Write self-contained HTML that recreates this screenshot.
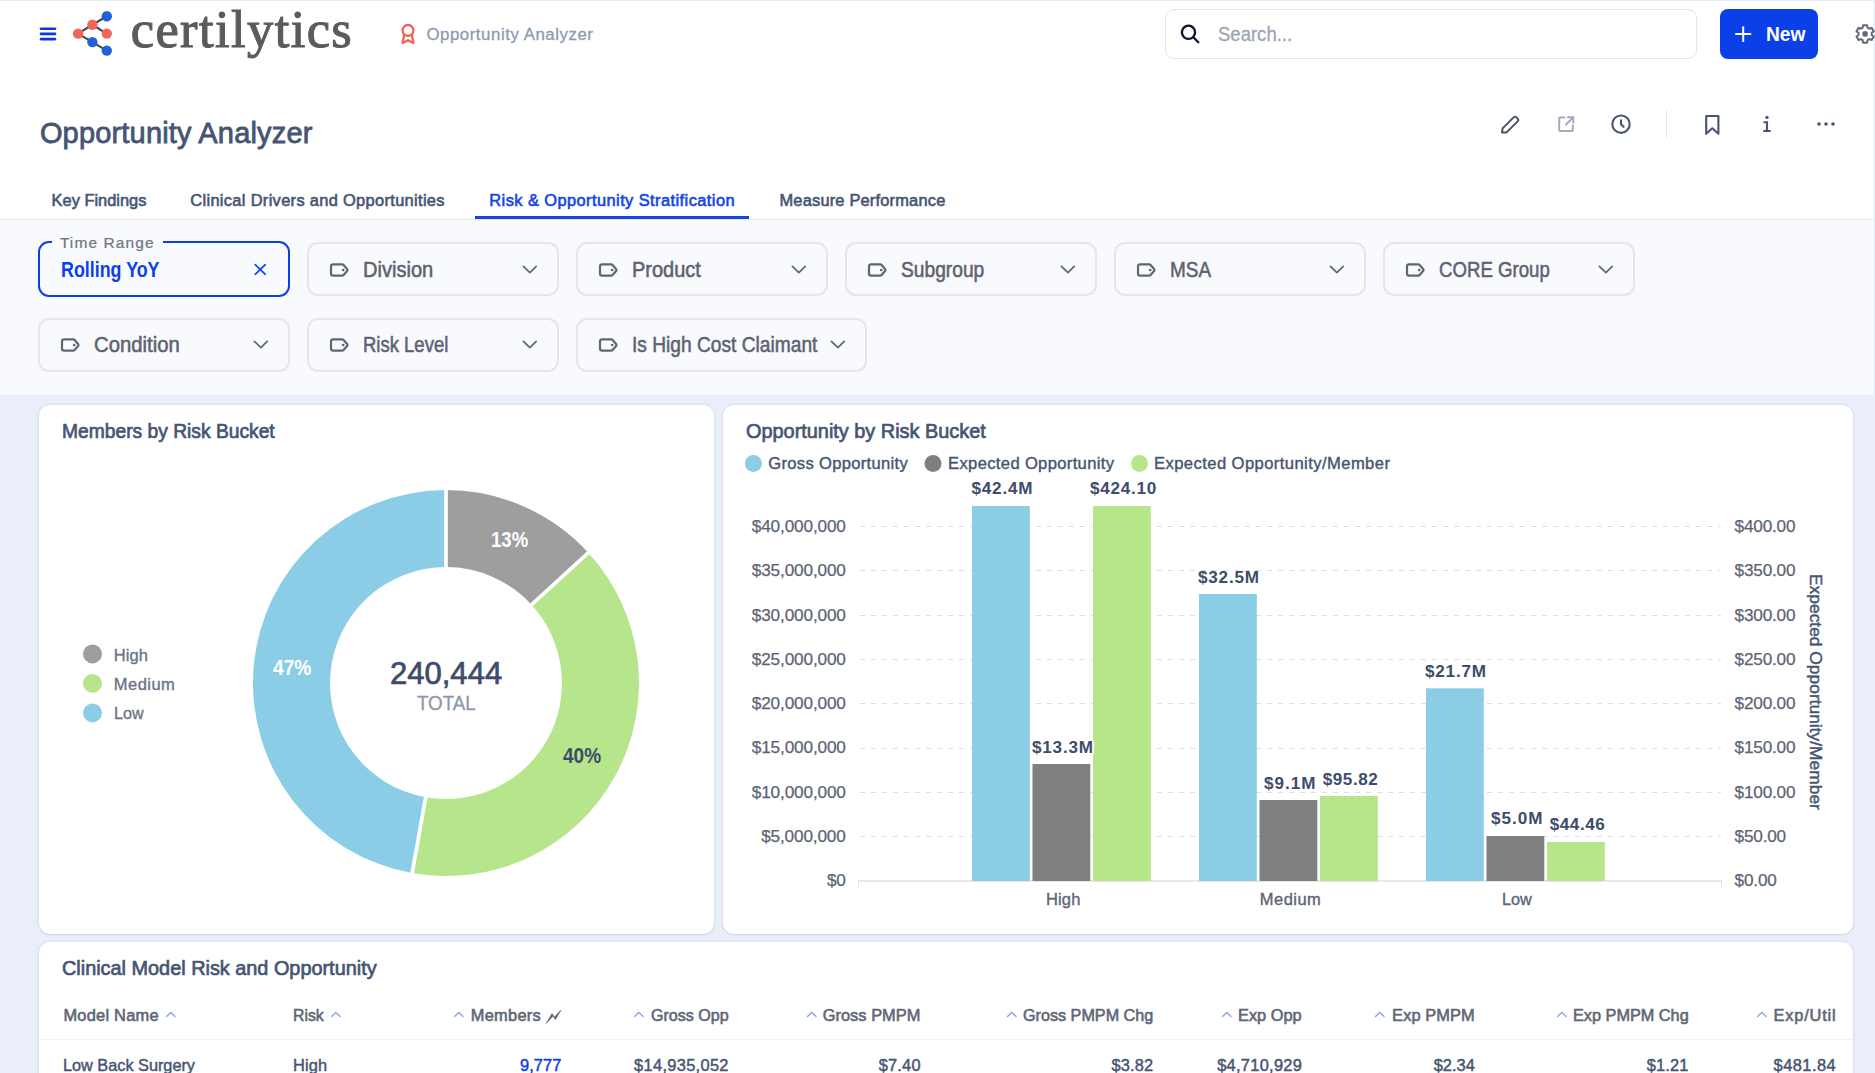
<!DOCTYPE html>
<html><head><meta charset="utf-8"><title>Opportunity Analyzer</title>
<style>
html,body{margin:0;padding:0;}
body{width:1875px;height:1073px;overflow:hidden;position:relative;background:#e9eefa;font-family:"Liberation Sans",sans-serif;}
.t{position:absolute;white-space:nowrap;}
.r{position:absolute;}
</style></head><body>
<div class="r" style="left:0px;top:0px;width:1874px;height:219px;background:#ffffff"></div>
<div class="r" style="left:0px;top:0px;width:1875px;height:1px;background:#e4eaf7"></div>
<div class="r" style="left:0px;top:219px;width:1874px;height:1px;background:#ebe9ea"></div>
<div class="r" style="left:0px;top:220px;width:1874px;height:175px;background:#f9fafd"></div>
<div class="r" style="left:1874px;top:0px;width:1px;height:395px;background:#e4eaf7"></div>
<svg class="r" style="left:36px;top:24px;" width="24" height="20" viewBox="0 0 24 20"><line x1="5" y1="4.7" x2="19" y2="4.7" stroke="#0a36e6" stroke-width="2.6" stroke-linecap="round"/><line x1="5" y1="9.9" x2="19" y2="9.9" stroke="#0a36e6" stroke-width="2.6" stroke-linecap="round"/><line x1="5" y1="15.1" x2="19" y2="15.1" stroke="#0a36e6" stroke-width="2.6" stroke-linecap="round"/></svg>
<svg class="r" style="left:66px;top:6px;" width="50" height="52" viewBox="0 0 50 52"><line x1="12.1" y1="27.6" x2="26.4" y2="18.8" stroke="#4a4a4a" stroke-width="2.2"/><line x1="26.4" y1="18.8" x2="40.8" y2="10.3" stroke="#4a4a4a" stroke-width="2.2"/><line x1="26.4" y1="18.8" x2="40.8" y2="27.6" stroke="#4a4a4a" stroke-width="2.2"/><line x1="12.1" y1="27.6" x2="26.4" y2="36.1" stroke="#4a4a4a" stroke-width="2.2"/><line x1="26.4" y1="36.1" x2="40.8" y2="44.6" stroke="#4a4a4a" stroke-width="2.2"/><circle cx="12.1" cy="27.6" r="5.2" fill="#f0675a"/><circle cx="26.4" cy="18.8" r="5.2" fill="#f0675a"/><circle cx="40.8" cy="27.6" r="5.2" fill="#f0675a"/><circle cx="40.8" cy="10.3" r="5.2" fill="#2160d9"/><circle cx="26.4" cy="36.1" r="5.2" fill="#2160d9"/><circle cx="40.8" cy="44.6" r="5.2" fill="#2160d9"/></svg>
<div class="t" style="left:130.70px;top:3.00px;font-size:52.50px;line-height:52.50px;font-weight:normal;color:#5b5b5b;letter-spacing:1.410px;font-family:'Liberation Serif', serif;-webkit-text-stroke:1.1px #5b5b5b">certilytics</div>
<svg class="r" style="left:399px;top:22px;" width="18" height="24" viewBox="0 0 18 24"><g fill="none" stroke="#ef6457" stroke-width="2.3" stroke-linejoin="round"><circle cx="9" cy="8.4" r="5.4"/><path d="M5.3 12.6 L3.5 21 L9 18.4 L14.5 21 L12.7 12.6"/></g></svg>
<div class="t" style="left:426.40px;top:27.00px;font-size:16.80px;line-height:16.80px;font-weight:normal;color:#8c9ab3;letter-spacing:0.568px;font-family:'Liberation Sans', sans-serif;-webkit-text-stroke:0.3px #8c9ab3">Opportunity Analyzer</div>
<div class="r" style="left:1165px;top:9px;width:530px;height:48px;background:#fff;border:1.5px solid #e6e6e8;border-radius:9px"></div>
<svg class="r" style="left:1178px;top:22px;" width="24" height="24" viewBox="0 0 24 24"><g fill="none" stroke="#0b1236" stroke-width="2.3" stroke-linecap="round"><circle cx="10.5" cy="10.3" r="6.6"/><line x1="15.3" y1="15.2" x2="20.3" y2="20.3"/></g></svg>
<div class="t" style="left:1217.90px;top:24.00px;font-size:20.80px;line-height:20.80px;font-weight:normal;color:#9ba4b6;letter-spacing:0.000px;font-family:'Liberation Sans', sans-serif;transform:scaleX(0.8906);transform-origin:0 0;-webkit-text-stroke:0.3px #9ba4b6">Search...</div>
<div class="r" style="left:1720px;top:9px;width:98px;height:50px;background:#0b3fe8;border-radius:8px"></div>
<svg class="r" style="left:1733px;top:24px;" width="20" height="20" viewBox="0 0 20 20"><g stroke="#fff" stroke-width="2" stroke-linecap="butt"><line x1="2.2" y1="10" x2="18.2" y2="10"/><line x1="10.2" y1="2.4" x2="10.2" y2="17.9"/></g></svg>
<div class="t" style="left:1766.20px;top:24.00px;font-size:20.80px;line-height:20.80px;font-weight:bold;color:#ffffff;letter-spacing:0.000px;font-family:'Liberation Sans', sans-serif;transform:scaleX(0.9231);transform-origin:0 0;">New</div>
<svg class="r" style="left:1854px;top:23px;" width="21" height="22" viewBox="0 0 21 22"><path d="M8.70 4.65 L9.08 2.13 L13.12 2.13 L13.50 4.65 L15.32 5.69 L15.32 5.69 L17.68 4.76 L19.71 8.27 L17.72 9.85 L17.72 11.95 L17.72 11.95 L19.71 13.53 L17.68 17.04 L15.32 16.11 L13.50 17.15 L13.50 17.15 L13.12 19.67 L9.08 19.67 L8.70 17.15 L6.88 16.11 L6.88 16.11 L4.52 17.04 L2.49 13.53 L4.48 11.95 L4.48 9.85 L4.48 9.85 L2.49 8.27 L4.52 4.76 L6.88 5.69 L8.70 4.65 Z" fill="none" stroke="#636a77" stroke-width="2" stroke-linejoin="round"/><circle cx="11.1" cy="10.9" r="2.8" fill="#636a77"/></svg>
<div class="t" style="left:39.90px;top:119.00px;font-size:29.00px;line-height:29.00px;font-weight:normal;color:#465573;letter-spacing:0.174px;font-family:'Liberation Sans', sans-serif;-webkit-text-stroke:0.8px #465573">Opportunity Analyzer</div>
<svg class="r" style="left:1498px;top:112px;" width="24" height="24" viewBox="0 0 24 24"><g fill="none" stroke="#475570" stroke-width="2" stroke-linejoin="round" stroke-linecap="round"><path d="M4 20.5 L4.6 16.4 L15.6 5.4 Q17 4 18.4 5.4 L19.6 6.6 Q21 8 19.6 9.4 L8.6 20.4 Z"/></g></svg>
<svg class="r" style="left:1556px;top:114px;" width="20" height="20" viewBox="0 0 20 20"><g fill="none" stroke="#a3aab9" stroke-width="2" stroke-linecap="round" stroke-linejoin="round"><path d="M8.5 3.5 H4 Q3.2 3.5 3.2 4.3 V16.3 Q3.2 17.1 4 17.1 H16 Q16.8 17.1 16.8 16.3 V11.5"/><path d="M12 3.2 H17.3 V8.5"/><line x1="17" y1="3.5" x2="10" y2="10.5"/></g></svg>
<svg class="r" style="left:1609px;top:112px;" width="24" height="24" viewBox="0 0 24 24"><g fill="none" stroke="#475570" stroke-width="2.1" stroke-linecap="round"><circle cx="12" cy="12.2" r="8.7"/><path d="M12 8.2 V12.2 L14.6 14.8"/></g></svg>
<div class="r" style="left:1666px;top:110px;width:1px;height:28px;background:#e5e7eb"></div>
<svg class="r" style="left:1702px;top:112px;" width="20" height="26" viewBox="0 0 20 26"><g fill="none" stroke="#475570" stroke-width="2.1" stroke-linejoin="round"><path d="M4.2 4 H16.4 V21.8 L10.3 16.3 L4.2 21.8 Z"/></g></svg>
<svg class="r" style="left:1758px;top:112px;" width="16" height="24" viewBox="0 0 16 24"><g fill="#475570"><circle cx="9" cy="5.4" r="1.7"/></g><g fill="none" stroke="#475570" stroke-width="2.1"><path d="M5.5 10.3 H9 V19.3"/><path d="M5.3 19 H12.6"/></g></svg>
<svg class="r" style="left:1814px;top:116px;" width="24" height="16" viewBox="0 0 24 16"><g fill="#475570"><circle cx="5" cy="8" r="1.8"/><circle cx="12" cy="8" r="1.8"/><circle cx="19" cy="8" r="1.8"/></g></svg>
<div class="t" style="left:51.60px;top:192.00px;font-size:16.40px;line-height:16.40px;font-weight:normal;color:#465573;letter-spacing:0.000px;font-family:'Liberation Sans', sans-serif;-webkit-text-stroke:0.6px #465573">Key Findings</div>
<div class="t" style="left:190.30px;top:192.00px;font-size:16.40px;line-height:16.40px;font-weight:normal;color:#465573;letter-spacing:0.333px;font-family:'Liberation Sans', sans-serif;-webkit-text-stroke:0.6px #465573">Clinical Drivers and Opportunities</div>
<div class="t" style="left:489.30px;top:192.00px;font-size:16.40px;line-height:16.40px;font-weight:normal;color:#1346e6;letter-spacing:0.434px;font-family:'Liberation Sans', sans-serif;-webkit-text-stroke:0.6px #1346e6">Risk &amp; Opportunity Stratification</div>
<div class="t" style="left:779.50px;top:192.00px;font-size:16.40px;line-height:16.40px;font-weight:normal;color:#465573;letter-spacing:0.200px;font-family:'Liberation Sans', sans-serif;-webkit-text-stroke:0.6px #465573">Measure Performance</div>
<div class="r" style="left:475px;top:216px;width:274px;height:3px;background:#1346e6"></div>
<div class="r" style="left:38px;top:241px;width:248px;height:52px;border:2px solid #0b3fe8;border-radius:11px;background:#f9fafd"></div>
<div class="r" style="left:52px;top:236px;width:111px;height:10px;background:#f9fafd"></div>
<div class="t" style="left:59.90px;top:235.00px;font-size:15.50px;line-height:15.50px;font-weight:normal;color:#6f7480;letter-spacing:1.089px;font-family:'Liberation Sans', sans-serif;-webkit-text-stroke:0.2px #6f7480">Time Range</div>
<div class="t" style="left:60.60px;top:260.00px;font-size:21.30px;line-height:21.30px;font-weight:bold;color:#0b3fe8;letter-spacing:0.000px;font-family:'Liberation Sans', sans-serif;transform:scaleX(0.8383);transform-origin:0 0;">Rolling YoY</div>
<svg class="r" style="left:252px;top:261px;" width="16" height="16" viewBox="0 0 16 16"><g stroke="#0b3fe8" stroke-width="1.6" stroke-linecap="round"><line x1="3.2" y1="3.6" x2="13.3" y2="13.3"/><line x1="13.3" y1="3.6" x2="3.2" y2="13.3"/></g></svg>
<div class="r" style="left:307px;top:242px;width:248px;height:50px;border:2px solid #e8e5e5;border-radius:11px;background:#f9fafd"></div>
<svg class="r" style="left:327px;top:262px;" width="24" height="16" viewBox="0 0 24 16"><g fill="none" stroke="#5f6572" stroke-width="2.2" stroke-linejoin="round"><path d="M6.2 2.3 H15.1 Q16 2.3 16.6 3 L20.3 7.3 Q20.8 8 20.3 8.7 L16.6 13 Q16 13.7 15.1 13.7 H6.2 Q4 13.7 4 11.5 V4.5 Q4 2.3 6.2 2.3 Z"/></g><circle cx="16.2" cy="8" r="1.35" fill="#5f6572"/></svg>
<div class="t" style="left:362.70px;top:260.00px;font-size:21.50px;line-height:21.50px;font-weight:normal;color:#5d6371;letter-spacing:0.000px;font-family:'Liberation Sans', sans-serif;transform:scaleX(0.9323);transform-origin:0 0;-webkit-text-stroke:0.55px #5d6371">Division</div>
<svg class="r" style="left:521px;top:263px;" width="18" height="12" viewBox="0 0 18 12"><path d="M2.4 3.3 L8.9 9.6 L15.2 3.3" fill="none" stroke="#5f6572" stroke-width="1.7" stroke-linecap="round" stroke-linejoin="round"/></svg>
<div class="r" style="left:576px;top:242px;width:248px;height:50px;border:2px solid #e8e5e5;border-radius:11px;background:#f9fafd"></div>
<svg class="r" style="left:596px;top:262px;" width="24" height="16" viewBox="0 0 24 16"><g fill="none" stroke="#5f6572" stroke-width="2.2" stroke-linejoin="round"><path d="M6.2 2.3 H15.1 Q16 2.3 16.6 3 L20.3 7.3 Q20.8 8 20.3 8.7 L16.6 13 Q16 13.7 15.1 13.7 H6.2 Q4 13.7 4 11.5 V4.5 Q4 2.3 6.2 2.3 Z"/></g><circle cx="16.2" cy="8" r="1.35" fill="#5f6572"/></svg>
<div class="t" style="left:631.70px;top:260.00px;font-size:21.50px;line-height:21.50px;font-weight:normal;color:#5d6371;letter-spacing:0.000px;font-family:'Liberation Sans', sans-serif;transform:scaleX(0.9298);transform-origin:0 0;-webkit-text-stroke:0.55px #5d6371">Product</div>
<svg class="r" style="left:790px;top:263px;" width="18" height="12" viewBox="0 0 18 12"><path d="M2.4 3.3 L8.9 9.6 L15.2 3.3" fill="none" stroke="#5f6572" stroke-width="1.7" stroke-linecap="round" stroke-linejoin="round"/></svg>
<div class="r" style="left:845px;top:242px;width:248px;height:50px;border:2px solid #e8e5e5;border-radius:11px;background:#f9fafd"></div>
<svg class="r" style="left:865px;top:262px;" width="24" height="16" viewBox="0 0 24 16"><g fill="none" stroke="#5f6572" stroke-width="2.2" stroke-linejoin="round"><path d="M6.2 2.3 H15.1 Q16 2.3 16.6 3 L20.3 7.3 Q20.8 8 20.3 8.7 L16.6 13 Q16 13.7 15.1 13.7 H6.2 Q4 13.7 4 11.5 V4.5 Q4 2.3 6.2 2.3 Z"/></g><circle cx="16.2" cy="8" r="1.35" fill="#5f6572"/></svg>
<div class="t" style="left:900.70px;top:260.00px;font-size:21.50px;line-height:21.50px;font-weight:normal;color:#5d6371;letter-spacing:0.000px;font-family:'Liberation Sans', sans-serif;transform:scaleX(0.8927);transform-origin:0 0;-webkit-text-stroke:0.55px #5d6371">Subgroup</div>
<svg class="r" style="left:1059px;top:263px;" width="18" height="12" viewBox="0 0 18 12"><path d="M2.4 3.3 L8.9 9.6 L15.2 3.3" fill="none" stroke="#5f6572" stroke-width="1.7" stroke-linecap="round" stroke-linejoin="round"/></svg>
<div class="r" style="left:1114px;top:242px;width:248px;height:50px;border:2px solid #e8e5e5;border-radius:11px;background:#f9fafd"></div>
<svg class="r" style="left:1134px;top:262px;" width="24" height="16" viewBox="0 0 24 16"><g fill="none" stroke="#5f6572" stroke-width="2.2" stroke-linejoin="round"><path d="M6.2 2.3 H15.1 Q16 2.3 16.6 3 L20.3 7.3 Q20.8 8 20.3 8.7 L16.6 13 Q16 13.7 15.1 13.7 H6.2 Q4 13.7 4 11.5 V4.5 Q4 2.3 6.2 2.3 Z"/></g><circle cx="16.2" cy="8" r="1.35" fill="#5f6572"/></svg>
<div class="t" style="left:1169.70px;top:260.00px;font-size:21.50px;line-height:21.50px;font-weight:normal;color:#5d6371;letter-spacing:0.000px;font-family:'Liberation Sans', sans-serif;transform:scaleX(0.8820);transform-origin:0 0;-webkit-text-stroke:0.55px #5d6371">MSA</div>
<svg class="r" style="left:1328px;top:263px;" width="18" height="12" viewBox="0 0 18 12"><path d="M2.4 3.3 L8.9 9.6 L15.2 3.3" fill="none" stroke="#5f6572" stroke-width="1.7" stroke-linecap="round" stroke-linejoin="round"/></svg>
<div class="r" style="left:1383px;top:242px;width:248px;height:50px;border:2px solid #e8e5e5;border-radius:11px;background:#f9fafd"></div>
<svg class="r" style="left:1403px;top:262px;" width="24" height="16" viewBox="0 0 24 16"><g fill="none" stroke="#5f6572" stroke-width="2.2" stroke-linejoin="round"><path d="M6.2 2.3 H15.1 Q16 2.3 16.6 3 L20.3 7.3 Q20.8 8 20.3 8.7 L16.6 13 Q16 13.7 15.1 13.7 H6.2 Q4 13.7 4 11.5 V4.5 Q4 2.3 6.2 2.3 Z"/></g><circle cx="16.2" cy="8" r="1.35" fill="#5f6572"/></svg>
<div class="t" style="left:1438.70px;top:260.00px;font-size:21.50px;line-height:21.50px;font-weight:normal;color:#5d6371;letter-spacing:0.000px;font-family:'Liberation Sans', sans-serif;transform:scaleX(0.8662);transform-origin:0 0;-webkit-text-stroke:0.55px #5d6371">CORE Group</div>
<svg class="r" style="left:1597px;top:263px;" width="18" height="12" viewBox="0 0 18 12"><path d="M2.4 3.3 L8.9 9.6 L15.2 3.3" fill="none" stroke="#5f6572" stroke-width="1.7" stroke-linecap="round" stroke-linejoin="round"/></svg>
<div class="r" style="left:38px;top:318px;width:248px;height:50px;border:2px solid #e8e5e5;border-radius:11px;background:#f9fafd"></div>
<svg class="r" style="left:58px;top:337px;" width="24" height="16" viewBox="0 0 24 16"><g fill="none" stroke="#5f6572" stroke-width="2.2" stroke-linejoin="round"><path d="M6.2 2.3 H15.1 Q16 2.3 16.6 3 L20.3 7.3 Q20.8 8 20.3 8.7 L16.6 13 Q16 13.7 15.1 13.7 H6.2 Q4 13.7 4 11.5 V4.5 Q4 2.3 6.2 2.3 Z"/></g><circle cx="16.2" cy="8" r="1.35" fill="#5f6572"/></svg>
<div class="t" style="left:93.70px;top:335.00px;font-size:21.50px;line-height:21.50px;font-weight:normal;color:#5d6371;letter-spacing:0.000px;font-family:'Liberation Sans', sans-serif;transform:scaleX(0.9438);transform-origin:0 0;-webkit-text-stroke:0.55px #5d6371">Condition</div>
<svg class="r" style="left:252px;top:338px;" width="18" height="12" viewBox="0 0 18 12"><path d="M2.4 3.3 L8.9 9.6 L15.2 3.3" fill="none" stroke="#5f6572" stroke-width="1.7" stroke-linecap="round" stroke-linejoin="round"/></svg>
<div class="r" style="left:307px;top:318px;width:248px;height:50px;border:2px solid #e8e5e5;border-radius:11px;background:#f9fafd"></div>
<svg class="r" style="left:327px;top:337px;" width="24" height="16" viewBox="0 0 24 16"><g fill="none" stroke="#5f6572" stroke-width="2.2" stroke-linejoin="round"><path d="M6.2 2.3 H15.1 Q16 2.3 16.6 3 L20.3 7.3 Q20.8 8 20.3 8.7 L16.6 13 Q16 13.7 15.1 13.7 H6.2 Q4 13.7 4 11.5 V4.5 Q4 2.3 6.2 2.3 Z"/></g><circle cx="16.2" cy="8" r="1.35" fill="#5f6572"/></svg>
<div class="t" style="left:362.70px;top:335.00px;font-size:21.50px;line-height:21.50px;font-weight:normal;color:#5d6371;letter-spacing:0.000px;font-family:'Liberation Sans', sans-serif;transform:scaleX(0.8599);transform-origin:0 0;-webkit-text-stroke:0.55px #5d6371">Risk Level</div>
<svg class="r" style="left:521px;top:338px;" width="18" height="12" viewBox="0 0 18 12"><path d="M2.4 3.3 L8.9 9.6 L15.2 3.3" fill="none" stroke="#5f6572" stroke-width="1.7" stroke-linecap="round" stroke-linejoin="round"/></svg>
<div class="r" style="left:576px;top:318px;width:287px;height:50px;border:2px solid #e8e5e5;border-radius:11px;background:#f9fafd"></div>
<svg class="r" style="left:596px;top:337px;" width="24" height="16" viewBox="0 0 24 16"><g fill="none" stroke="#5f6572" stroke-width="2.2" stroke-linejoin="round"><path d="M6.2 2.3 H15.1 Q16 2.3 16.6 3 L20.3 7.3 Q20.8 8 20.3 8.7 L16.6 13 Q16 13.7 15.1 13.7 H6.2 Q4 13.7 4 11.5 V4.5 Q4 2.3 6.2 2.3 Z"/></g><circle cx="16.2" cy="8" r="1.35" fill="#5f6572"/></svg>
<div class="t" style="left:631.70px;top:335.00px;font-size:21.50px;line-height:21.50px;font-weight:normal;color:#5d6371;letter-spacing:0.000px;font-family:'Liberation Sans', sans-serif;transform:scaleX(0.8918);transform-origin:0 0;-webkit-text-stroke:0.55px #5d6371">Is High Cost Claimant</div>
<svg class="r" style="left:829px;top:338px;" width="18" height="12" viewBox="0 0 18 12"><path d="M2.4 3.3 L8.9 9.6 L15.2 3.3" fill="none" stroke="#5f6572" stroke-width="1.7" stroke-linecap="round" stroke-linejoin="round"/></svg>
<div class="r" style="left:39px;top:405px;width:675px;height:529px;background:#fff;border-radius:11px;box-shadow:0 0 3px rgba(40,50,90,0.13),0 1px 2px rgba(40,50,90,0.08)"></div>
<div class="r" style="left:723px;top:405px;width:1130px;height:529px;background:#fff;border-radius:11px;box-shadow:0 0 3px rgba(40,50,90,0.13),0 1px 2px rgba(40,50,90,0.08)"></div>
<div class="r" style="left:39px;top:942px;width:1814px;height:200px;background:#fff;border-radius:11px;box-shadow:0 0 3px rgba(40,50,90,0.13),0 1px 2px rgba(40,50,90,0.08)"></div>
<div class="t" style="left:62.40px;top:421.00px;font-size:20.30px;line-height:20.30px;font-weight:normal;color:#465573;letter-spacing:0.000px;font-family:'Liberation Sans', sans-serif;transform:scaleX(0.9483);transform-origin:0 0;-webkit-text-stroke:0.7px #465573">Members by Risk Bucket</div>
<svg class="r" style="left:82px;top:643px;" width="22" height="22" viewBox="0 0 22 22"><circle cx="10.5" cy="10.90" r="9.5" fill="#9e9e9e"/></svg>
<div class="t" style="left:113.80px;top:647.00px;font-size:16.50px;line-height:16.50px;font-weight:normal;color:#6b7385;letter-spacing:0.100px;font-family:'Liberation Sans', sans-serif;-webkit-text-stroke:0.35px #6b7385">High</div>
<svg class="r" style="left:82px;top:673px;" width="22" height="22" viewBox="0 0 22 22"><circle cx="10.5" cy="10.40" r="9.5" fill="#b7e58b"/></svg>
<div class="t" style="left:113.80px;top:676.00px;font-size:16.50px;line-height:16.50px;font-weight:normal;color:#6b7385;letter-spacing:0.460px;font-family:'Liberation Sans', sans-serif;-webkit-text-stroke:0.35px #6b7385">Medium</div>
<svg class="r" style="left:82px;top:702px;" width="22" height="22" viewBox="0 0 22 22"><circle cx="10.5" cy="10.90" r="9.5" fill="#8bcde6"/></svg>
<div class="t" style="left:113.80px;top:705.00px;font-size:16.50px;line-height:16.50px;font-weight:normal;color:#6b7385;letter-spacing:0.000px;font-family:'Liberation Sans', sans-serif;transform:scaleX(0.9770);transform-origin:0 0;-webkit-text-stroke:0.35px #6b7385">Low</div>
<svg class="r" style="left:0;top:0" width="720" height="940" viewBox="0 0 720 940"><path d="M446.00 490.10 A193.0 193.0 0 0 1 588.29 552.71 L531.52 604.73 A116.0 116.0 0 0 0 446.00 567.10 Z" fill="#9e9e9e"/><path d="M588.29 552.71 A193.0 193.0 0 0 1 412.15 873.11 L425.66 797.30 A116.0 116.0 0 0 0 531.52 604.73 Z" fill="#b7e58b"/><path d="M412.15 873.11 A193.0 193.0 0 0 1 446.00 490.10 L446.00 567.10 A116.0 116.0 0 0 0 425.66 797.30 Z" fill="#8bcde6"/><line x1="446.00" y1="569.10" x2="446.00" y2="488.10" stroke="#fff" stroke-width="3.7"/><line x1="530.05" y1="606.08" x2="589.77" y2="551.36" stroke="#fff" stroke-width="3.7"/><line x1="426.01" y1="795.33" x2="411.80" y2="875.08" stroke="#fff" stroke-width="3.7"/></svg>
<div class="t" style="left:490.80px;top:530.00px;font-size:21.50px;line-height:21.50px;font-weight:bold;color:#ffffff;letter-spacing:0.000px;font-family:'Liberation Sans', sans-serif;transform:scaleX(0.8628);transform-origin:0 0;">13%</div>
<div class="t" style="left:273.30px;top:658.00px;font-size:21.50px;line-height:21.50px;font-weight:bold;color:#ffffff;letter-spacing:0.000px;font-family:'Liberation Sans', sans-serif;transform:scaleX(0.8907);transform-origin:0 0;">47%</div>
<div class="t" style="left:562.90px;top:746.00px;font-size:21.50px;line-height:21.50px;font-weight:bold;color:#3e4c6b;letter-spacing:0.000px;font-family:'Liberation Sans', sans-serif;transform:scaleX(0.8837);transform-origin:0 0;">40%</div>
<div class="t" style="left:389.90px;top:658.00px;font-size:31.00px;line-height:31.00px;font-weight:normal;color:#3e4c6b;letter-spacing:0.033px;font-family:'Liberation Sans', sans-serif;-webkit-text-stroke:0.7px #3e4c6b">240,444</div>
<div class="t" style="left:416.90px;top:692.00px;font-size:21.00px;line-height:21.00px;font-weight:normal;color:#8e96a8;letter-spacing:0.000px;font-family:'Liberation Sans', sans-serif;transform:scaleX(0.8935);transform-origin:0 0;-webkit-text-stroke:0.3px #8e96a8">TOTAL</div>
<div class="t" style="left:745.90px;top:421.00px;font-size:20.30px;line-height:20.30px;font-weight:normal;color:#465573;letter-spacing:0.000px;font-family:'Liberation Sans', sans-serif;transform:scaleX(0.9804);transform-origin:0 0;-webkit-text-stroke:0.7px #465573">Opportunity by Risk Bucket</div>
<svg class="r" style="left:740px;top:450px;" width="420" height="28" viewBox="0 0 420 28"><circle cx="13.40" cy="13.60" r="8.5" fill="#8bcde5"/><circle cx="193.00" cy="13.60" r="8.5" fill="#7f7f7f"/><circle cx="399.50" cy="13.60" r="8.5" fill="#b6e58a"/></svg>
<div class="t" style="left:768.30px;top:456.00px;font-size:16.60px;line-height:16.60px;font-weight:normal;color:#465573;letter-spacing:0.300px;font-family:'Liberation Sans', sans-serif;-webkit-text-stroke:0.4px #465573">Gross Opportunity</div>
<div class="t" style="left:948.10px;top:456.00px;font-size:16.60px;line-height:16.60px;font-weight:normal;color:#465573;letter-spacing:0.332px;font-family:'Liberation Sans', sans-serif;-webkit-text-stroke:0.4px #465573">Expected Opportunity</div>
<div class="t" style="left:1154.00px;top:456.00px;font-size:16.60px;line-height:16.60px;font-weight:normal;color:#465573;letter-spacing:0.419px;font-family:'Liberation Sans', sans-serif;-webkit-text-stroke:0.4px #465573">Expected Opportunity/Member</div>
<svg class="r" style="left:723px;top:405px;" width="1130" height="529" viewBox="0 0 1130 529"><line x1="137" y1="431.50" x2="998" y2="431.50" stroke="#dedede" stroke-width="1" stroke-dasharray="5 6"/><line x1="137" y1="387.50" x2="998" y2="387.50" stroke="#dedede" stroke-width="1" stroke-dasharray="5 6"/><line x1="137" y1="343.50" x2="998" y2="343.50" stroke="#dedede" stroke-width="1" stroke-dasharray="5 6"/><line x1="137" y1="298.50" x2="998" y2="298.50" stroke="#dedede" stroke-width="1" stroke-dasharray="5 6"/><line x1="137" y1="254.50" x2="998" y2="254.50" stroke="#dedede" stroke-width="1" stroke-dasharray="5 6"/><line x1="137" y1="210.50" x2="998" y2="210.50" stroke="#dedede" stroke-width="1" stroke-dasharray="5 6"/><line x1="137" y1="165.50" x2="998" y2="165.50" stroke="#dedede" stroke-width="1" stroke-dasharray="5 6"/><line x1="137" y1="121.50" x2="998" y2="121.50" stroke="#dedede" stroke-width="1" stroke-dasharray="5 6"/><line x1="135" y1="476" x2="999" y2="476" stroke="#e8e6e7" stroke-width="2"/><line x1="135.5" y1="475" x2="135.5" y2="484" stroke="#e8e6e7" stroke-width="1"/><line x1="998.5" y1="475" x2="998.5" y2="484" stroke="#e8e6e7" stroke-width="1"/><rect x="249.00" y="101.00" width="57.8" height="375.00" fill="#8bcde5"/><rect x="309.50" y="359.00" width="57.8" height="117.00" fill="#7f7f7f"/><rect x="370.00" y="101.00" width="57.8" height="375.00" fill="#b6e58a"/><rect x="476.00" y="189.00" width="57.8" height="287.00" fill="#8bcde5"/><rect x="536.50" y="395.00" width="57.8" height="81.00" fill="#7f7f7f"/><rect x="597.00" y="391.00" width="57.8" height="85.00" fill="#b6e58a"/><rect x="703.00" y="283.30" width="57.8" height="192.70" fill="#8bcde5"/><rect x="763.50" y="431.00" width="57.8" height="45.00" fill="#7f7f7f"/><rect x="824.00" y="437.00" width="57.8" height="39.00" fill="#b6e58a"/></svg>
<div class="t" style="left:826.95px;top:872.00px;font-size:17.20px;line-height:17.20px;font-weight:normal;color:#5c6475;letter-spacing:-0.150px;font-family:'Liberation Sans', sans-serif;-webkit-text-stroke:0.25px #5c6475">$0</div>
<div class="t" style="left:1734.60px;top:872.00px;font-size:17.20px;line-height:17.20px;font-weight:normal;color:#5c6475;letter-spacing:-0.200px;font-family:'Liberation Sans', sans-serif;-webkit-text-stroke:0.25px #5c6475">$0.00</div>
<div class="t" style="left:761.15px;top:828.00px;font-size:17.20px;line-height:17.20px;font-weight:normal;color:#5c6475;letter-spacing:-0.150px;font-family:'Liberation Sans', sans-serif;-webkit-text-stroke:0.25px #5c6475">$5,000,000</div>
<div class="t" style="left:1734.60px;top:828.00px;font-size:17.20px;line-height:17.20px;font-weight:normal;color:#5c6475;letter-spacing:-0.200px;font-family:'Liberation Sans', sans-serif;-webkit-text-stroke:0.25px #5c6475">$50.00</div>
<div class="t" style="left:751.80px;top:784.00px;font-size:17.20px;line-height:17.20px;font-weight:normal;color:#5c6475;letter-spacing:-0.150px;font-family:'Liberation Sans', sans-serif;-webkit-text-stroke:0.25px #5c6475">$10,000,000</div>
<div class="t" style="left:1734.60px;top:784.00px;font-size:17.20px;line-height:17.20px;font-weight:normal;color:#5c6475;letter-spacing:-0.200px;font-family:'Liberation Sans', sans-serif;-webkit-text-stroke:0.25px #5c6475">$100.00</div>
<div class="t" style="left:751.80px;top:739.00px;font-size:17.20px;line-height:17.20px;font-weight:normal;color:#5c6475;letter-spacing:-0.150px;font-family:'Liberation Sans', sans-serif;-webkit-text-stroke:0.25px #5c6475">$15,000,000</div>
<div class="t" style="left:1734.60px;top:739.00px;font-size:17.20px;line-height:17.20px;font-weight:normal;color:#5c6475;letter-spacing:-0.200px;font-family:'Liberation Sans', sans-serif;-webkit-text-stroke:0.25px #5c6475">$150.00</div>
<div class="t" style="left:751.80px;top:695.00px;font-size:17.20px;line-height:17.20px;font-weight:normal;color:#5c6475;letter-spacing:-0.150px;font-family:'Liberation Sans', sans-serif;-webkit-text-stroke:0.25px #5c6475">$20,000,000</div>
<div class="t" style="left:1734.60px;top:695.00px;font-size:17.20px;line-height:17.20px;font-weight:normal;color:#5c6475;letter-spacing:-0.200px;font-family:'Liberation Sans', sans-serif;-webkit-text-stroke:0.25px #5c6475">$200.00</div>
<div class="t" style="left:751.80px;top:651.00px;font-size:17.20px;line-height:17.20px;font-weight:normal;color:#5c6475;letter-spacing:-0.150px;font-family:'Liberation Sans', sans-serif;-webkit-text-stroke:0.25px #5c6475">$25,000,000</div>
<div class="t" style="left:1734.60px;top:651.00px;font-size:17.20px;line-height:17.20px;font-weight:normal;color:#5c6475;letter-spacing:-0.200px;font-family:'Liberation Sans', sans-serif;-webkit-text-stroke:0.25px #5c6475">$250.00</div>
<div class="t" style="left:751.80px;top:607.00px;font-size:17.20px;line-height:17.20px;font-weight:normal;color:#5c6475;letter-spacing:-0.150px;font-family:'Liberation Sans', sans-serif;-webkit-text-stroke:0.25px #5c6475">$30,000,000</div>
<div class="t" style="left:1734.60px;top:607.00px;font-size:17.20px;line-height:17.20px;font-weight:normal;color:#5c6475;letter-spacing:-0.200px;font-family:'Liberation Sans', sans-serif;-webkit-text-stroke:0.25px #5c6475">$300.00</div>
<div class="t" style="left:751.80px;top:562.00px;font-size:17.20px;line-height:17.20px;font-weight:normal;color:#5c6475;letter-spacing:-0.150px;font-family:'Liberation Sans', sans-serif;-webkit-text-stroke:0.25px #5c6475">$35,000,000</div>
<div class="t" style="left:1734.60px;top:562.00px;font-size:17.20px;line-height:17.20px;font-weight:normal;color:#5c6475;letter-spacing:-0.200px;font-family:'Liberation Sans', sans-serif;-webkit-text-stroke:0.25px #5c6475">$350.00</div>
<div class="t" style="left:751.80px;top:518.00px;font-size:17.20px;line-height:17.20px;font-weight:normal;color:#5c6475;letter-spacing:-0.150px;font-family:'Liberation Sans', sans-serif;-webkit-text-stroke:0.25px #5c6475">$40,000,000</div>
<div class="t" style="left:1734.60px;top:518.00px;font-size:17.20px;line-height:17.20px;font-weight:normal;color:#5c6475;letter-spacing:-0.200px;font-family:'Liberation Sans', sans-serif;-webkit-text-stroke:0.25px #5c6475">$400.00</div>
<div class="t" style="left:1045.90px;top:891.00px;font-size:16.50px;line-height:16.50px;font-weight:normal;color:#5c6475;letter-spacing:0.200px;font-family:'Liberation Sans', sans-serif;-webkit-text-stroke:0.35px #5c6475">High</div>
<div class="t" style="left:1259.80px;top:891.00px;font-size:16.50px;line-height:16.50px;font-weight:normal;color:#5c6475;letter-spacing:0.460px;font-family:'Liberation Sans', sans-serif;-webkit-text-stroke:0.35px #5c6475">Medium</div>
<div class="t" style="left:1502.00px;top:891.00px;font-size:16.50px;line-height:16.50px;font-weight:normal;color:#5c6475;letter-spacing:0.000px;font-family:'Liberation Sans', sans-serif;transform:scaleX(0.9868);transform-origin:0 0;-webkit-text-stroke:0.35px #5c6475">Low</div>
<div class="t" style="left:971.50px;top:480.00px;font-size:17.10px;line-height:17.10px;font-weight:bold;color:#3e4c6b;letter-spacing:0.800px;font-family:'Liberation Sans', sans-serif;">$42.4M</div>
<div class="t" style="left:1090.10px;top:480.00px;font-size:17.10px;line-height:17.10px;font-weight:bold;color:#3e4c6b;letter-spacing:0.733px;font-family:'Liberation Sans', sans-serif;">$424.10</div>
<div class="t" style="left:1032.00px;top:739.00px;font-size:17.10px;line-height:17.10px;font-weight:bold;color:#3e4c6b;letter-spacing:0.800px;font-family:'Liberation Sans', sans-serif;text-shadow:2px 0 #fff,-2px 0 #fff,0 2px #fff,0 -2px #fff,1.5px 1.5px #fff,-1.5px 1.5px #fff,1.5px -1.5px #fff,-1.5px -1.5px #fff">$13.3M</div>
<div class="t" style="left:1198.00px;top:569.00px;font-size:17.10px;line-height:17.10px;font-weight:bold;color:#3e4c6b;letter-spacing:0.800px;font-family:'Liberation Sans', sans-serif;">$32.5M</div>
<div class="t" style="left:1264.00px;top:775.00px;font-size:17.10px;line-height:17.10px;font-weight:bold;color:#3e4c6b;letter-spacing:0.975px;font-family:'Liberation Sans', sans-serif;">$9.1M</div>
<div class="t" style="left:1322.70px;top:771.00px;font-size:17.10px;line-height:17.10px;font-weight:bold;color:#3e4c6b;letter-spacing:0.580px;font-family:'Liberation Sans', sans-serif;">$95.82</div>
<div class="t" style="left:1425.00px;top:663.00px;font-size:17.10px;line-height:17.10px;font-weight:bold;color:#3e4c6b;letter-spacing:0.800px;font-family:'Liberation Sans', sans-serif;">$21.7M</div>
<div class="t" style="left:1491.00px;top:810.00px;font-size:17.10px;line-height:17.10px;font-weight:bold;color:#3e4c6b;letter-spacing:1.025px;font-family:'Liberation Sans', sans-serif;">$5.0M</div>
<div class="t" style="left:1549.70px;top:816.00px;font-size:17.10px;line-height:17.10px;font-weight:bold;color:#3e4c6b;letter-spacing:0.560px;font-family:'Liberation Sans', sans-serif;">$44.46</div>
<div class="t" style="left:1808px;top:574px;width:16px;height:237px;"><div style="position:absolute;left:16px;top:0;transform-origin:0 0;transform:rotate(90deg);font-size:17.4px;line-height:16px;color:#465573;white-space:nowrap;letter-spacing:0px;-webkit-text-stroke:0.45px #465573">Expected Opportunity/Member</div></div>
<div class="t" style="left:62.10px;top:958.00px;font-size:20.30px;line-height:20.30px;font-weight:normal;color:#465573;letter-spacing:0.000px;font-family:'Liberation Sans', sans-serif;transform:scaleX(0.9792);transform-origin:0 0;-webkit-text-stroke:0.7px #465573">Clinical Model Risk and Opportunity</div>
<div class="t" style="left:63.40px;top:1007.00px;font-size:16.40px;line-height:16.40px;font-weight:normal;color:#5f6777;letter-spacing:0.256px;font-family:'Liberation Sans', sans-serif;-webkit-text-stroke:0.6px #5f6777">Model Name</div>
<svg class="r" style="left:164.8px;top:1010px;" width="12" height="9" viewBox="0 0 12 9"><path d="M1.5 6.6 L5.8 2.4 L10.1 6.6" fill="none" stroke="#8aa4ec" stroke-width="1.35" stroke-linecap="round" stroke-linejoin="miter"/></svg>
<div class="t" style="left:293.00px;top:1007.00px;font-size:16.40px;line-height:16.40px;font-weight:normal;color:#5f6777;letter-spacing:0.000px;font-family:'Liberation Sans', sans-serif;transform:scaleX(0.9625);transform-origin:0 0;-webkit-text-stroke:0.6px #5f6777">Risk</div>
<svg class="r" style="left:329.8px;top:1010px;" width="12" height="9" viewBox="0 0 12 9"><path d="M1.5 6.6 L5.8 2.4 L10.1 6.6" fill="none" stroke="#8aa4ec" stroke-width="1.35" stroke-linecap="round" stroke-linejoin="miter"/></svg>
<svg class="r" style="left:452.9px;top:1010px;" width="12" height="9" viewBox="0 0 12 9"><path d="M1.5 6.6 L5.8 2.4 L10.1 6.6" fill="none" stroke="#8aa4ec" stroke-width="1.35" stroke-linecap="round" stroke-linejoin="miter"/></svg>
<div class="t" style="left:470.70px;top:1007.00px;font-size:16.40px;line-height:16.40px;font-weight:normal;color:#5f6777;letter-spacing:0.300px;font-family:'Liberation Sans', sans-serif;-webkit-text-stroke:0.6px #5f6777">Members</div>
<svg class="r" style="left:540px;top:1005px;" width="26" height="22" viewBox="0 0 26 22"><path d="M6 18.5 L12 8.6 L14.5 12 L21 5 L15.5 14.5 L13 11.3 Z" fill="#5f6777" stroke="#5f6777" stroke-width="0.6" stroke-linejoin="round"/></svg>
<svg class="r" style="left:632.9px;top:1010px;" width="12" height="9" viewBox="0 0 12 9"><path d="M1.5 6.6 L5.8 2.4 L10.1 6.6" fill="none" stroke="#8aa4ec" stroke-width="1.35" stroke-linecap="round" stroke-linejoin="miter"/></svg>
<div class="t" style="left:650.70px;top:1007.00px;font-size:16.40px;line-height:16.40px;font-weight:normal;color:#5f6777;letter-spacing:0.000px;font-family:'Liberation Sans', sans-serif;transform:scaleX(0.9811);transform-origin:0 0;-webkit-text-stroke:0.6px #5f6777">Gross Opp</div>
<svg class="r" style="left:805.7px;top:1010px;" width="12" height="9" viewBox="0 0 12 9"><path d="M1.5 6.6 L5.8 2.4 L10.1 6.6" fill="none" stroke="#8aa4ec" stroke-width="1.35" stroke-linecap="round" stroke-linejoin="miter"/></svg>
<div class="t" style="left:822.70px;top:1007.00px;font-size:16.40px;line-height:16.40px;font-weight:normal;color:#5f6777;letter-spacing:0.033px;font-family:'Liberation Sans', sans-serif;-webkit-text-stroke:0.6px #5f6777">Gross PMPM</div>
<svg class="r" style="left:1005.7px;top:1010px;" width="12" height="9" viewBox="0 0 12 9"><path d="M1.5 6.6 L5.8 2.4 L10.1 6.6" fill="none" stroke="#8aa4ec" stroke-width="1.35" stroke-linecap="round" stroke-linejoin="miter"/></svg>
<div class="t" style="left:1022.70px;top:1007.00px;font-size:16.40px;line-height:16.40px;font-weight:normal;color:#5f6777;letter-spacing:0.000px;font-family:'Liberation Sans', sans-serif;transform:scaleX(0.9864);transform-origin:0 0;-webkit-text-stroke:0.6px #5f6777">Gross PMPM Chg</div>
<svg class="r" style="left:1221.2px;top:1010px;" width="12" height="9" viewBox="0 0 12 9"><path d="M1.5 6.6 L5.8 2.4 L10.1 6.6" fill="none" stroke="#8aa4ec" stroke-width="1.35" stroke-linecap="round" stroke-linejoin="miter"/></svg>
<div class="t" style="left:1238.30px;top:1007.00px;font-size:16.40px;line-height:16.40px;font-weight:normal;color:#5f6777;letter-spacing:0.000px;font-family:'Liberation Sans', sans-serif;transform:scaleX(0.9969);transform-origin:0 0;-webkit-text-stroke:0.6px #5f6777">Exp Opp</div>
<svg class="r" style="left:1374.0px;top:1010px;" width="12" height="9" viewBox="0 0 12 9"><path d="M1.5 6.6 L5.8 2.4 L10.1 6.6" fill="none" stroke="#8aa4ec" stroke-width="1.35" stroke-linecap="round" stroke-linejoin="miter"/></svg>
<div class="t" style="left:1392.10px;top:1007.00px;font-size:16.40px;line-height:16.40px;font-weight:normal;color:#5f6777;letter-spacing:0.100px;font-family:'Liberation Sans', sans-serif;-webkit-text-stroke:0.6px #5f6777">Exp PMPM</div>
<svg class="r" style="left:1555.5px;top:1010px;" width="12" height="9" viewBox="0 0 12 9"><path d="M1.5 6.6 L5.8 2.4 L10.1 6.6" fill="none" stroke="#8aa4ec" stroke-width="1.35" stroke-linecap="round" stroke-linejoin="miter"/></svg>
<div class="t" style="left:1572.60px;top:1007.00px;font-size:16.40px;line-height:16.40px;font-weight:normal;color:#5f6777;letter-spacing:0.000px;font-family:'Liberation Sans', sans-serif;transform:scaleX(0.9923);transform-origin:0 0;-webkit-text-stroke:0.6px #5f6777">Exp PMPM Chg</div>
<svg class="r" style="left:1756.0px;top:1010px;" width="12" height="9" viewBox="0 0 12 9"><path d="M1.5 6.6 L5.8 2.4 L10.1 6.6" fill="none" stroke="#8aa4ec" stroke-width="1.35" stroke-linecap="round" stroke-linejoin="miter"/></svg>
<div class="t" style="left:1773.60px;top:1007.00px;font-size:16.40px;line-height:16.40px;font-weight:normal;color:#5f6777;letter-spacing:0.800px;font-family:'Liberation Sans', sans-serif;-webkit-text-stroke:0.6px #5f6777">Exp/Util</div>
<div class="r" style="left:39px;top:1039px;width:1814px;height:1px;background:#eff1f4"></div>
<div class="t" style="left:63.40px;top:1057.00px;font-size:16.40px;line-height:16.40px;font-weight:normal;color:#465573;letter-spacing:0.000px;font-family:'Liberation Sans', sans-serif;transform:scaleX(0.9925);transform-origin:0 0;-webkit-text-stroke:0.45px #465573">Low Back Surgery</div>
<div class="t" style="left:293.00px;top:1057.00px;font-size:16.40px;line-height:16.40px;font-weight:normal;color:#465573;letter-spacing:0.100px;font-family:'Liberation Sans', sans-serif;-webkit-text-stroke:0.45px #465573">High</div>
<div class="t" style="left:520.00px;top:1057.00px;font-size:16.40px;line-height:16.40px;font-weight:normal;color:#0b3fe8;letter-spacing:0.075px;font-family:'Liberation Sans', sans-serif;-webkit-text-stroke:0.45px #0b3fe8">9,777</div>
<div class="t" style="left:634.10px;top:1057.00px;font-size:16.40px;line-height:16.40px;font-weight:normal;color:#465573;letter-spacing:0.320px;font-family:'Liberation Sans', sans-serif;-webkit-text-stroke:0.45px #465573">$14,935,052</div>
<div class="t" style="left:878.70px;top:1057.00px;font-size:16.40px;line-height:16.40px;font-weight:normal;color:#465573;letter-spacing:0.200px;font-family:'Liberation Sans', sans-serif;-webkit-text-stroke:0.45px #465573">$7.40</div>
<div class="t" style="left:1111.40px;top:1057.00px;font-size:16.40px;line-height:16.40px;font-weight:normal;color:#465573;letter-spacing:0.150px;font-family:'Liberation Sans', sans-serif;-webkit-text-stroke:0.45px #465573">$3.82</div>
<div class="t" style="left:1217.20px;top:1057.00px;font-size:16.40px;line-height:16.40px;font-weight:normal;color:#465573;letter-spacing:0.289px;font-family:'Liberation Sans', sans-serif;-webkit-text-stroke:0.45px #465573">$4,710,929</div>
<div class="t" style="left:1433.70px;top:1057.00px;font-size:16.40px;line-height:16.40px;font-weight:normal;color:#465573;letter-spacing:0.025px;font-family:'Liberation Sans', sans-serif;-webkit-text-stroke:0.45px #465573">$2.34</div>
<div class="t" style="left:1646.80px;top:1057.00px;font-size:16.40px;line-height:16.40px;font-weight:normal;color:#465573;letter-spacing:0.150px;font-family:'Liberation Sans', sans-serif;-webkit-text-stroke:0.45px #465573">$1.21</div>
<div class="t" style="left:1773.60px;top:1057.00px;font-size:16.40px;line-height:16.40px;font-weight:normal;color:#465573;letter-spacing:0.467px;font-family:'Liberation Sans', sans-serif;-webkit-text-stroke:0.45px #465573">$481.84</div></body></html>
